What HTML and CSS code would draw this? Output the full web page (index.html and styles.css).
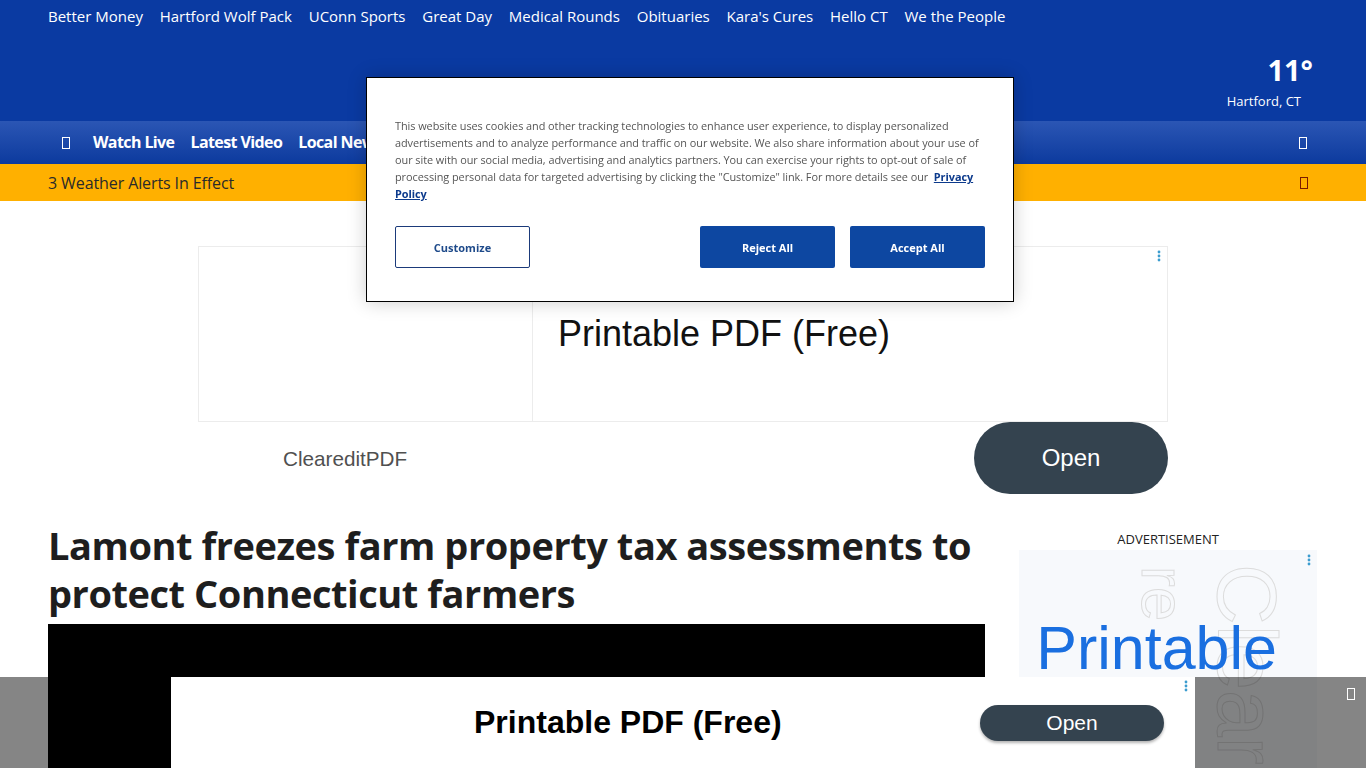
FILE: index.html
```html
<!DOCTYPE html>
<html lang="en">
<head>
<meta charset="utf-8">
<title>Lamont freezes farm property tax assessments</title>
<link rel="stylesheet" href="styles.css">
</head>
<body>
<header class="masthead">
  <nav class="toplinks">
    <a>Better Money</a><a>Hartford Wolf Pack</a><a>UConn Sports</a><a>Great Day</a><a>Medical Rounds</a><a>Obituaries</a><a>Kara's Cures</a><a>Hello CT</a><a>We the People</a>
  </nav>
  <div class="weather">
    <div class="temp">11°</div>
    <div class="city">Hartford, CT</div>
  </div>
</header>
<nav class="mainnav">
  <span class="glyph"></span>
  <a>Watch Live</a><a>Latest Video</a><a>Local News</a>
  <span class="spacer"></span>
  <span class="glyph"></span>
</nav>
<div class="alertbar">
  <span>3 Weather Alerts In Effect</span>
  <span class="glyph dark"></span>
</div>

<main>
  <section class="topad">
    <div class="adbox">
      <div class="adimg"></div>
      <div class="adtitle">Printable PDF (Free)</div>
      <svg class="dots" width="4" height="12" viewBox="0 0 4 12"><circle cx="2" cy="2" r="1.4"/><circle cx="2" cy="6" r="1.4"/><circle cx="2" cy="10" r="1.4"/></svg>
    </div>
    <div class="adfoot">
      <span class="brand">CleareditPDF</span>
      <span class="openbtn">Open</span>
    </div>
  </section>

  <section class="article">
    <div class="maincol">
      <h1>Lamont freezes farm property tax assessments to protect Connecticut farmers</h1>
      <div class="video"></div>
    </div>
    <aside class="sidecol">
      <div class="adlabel">ADVERTISEMENT</div>
      <div class="sidead">
        <span class="wm wm1">re</span>
        <span class="wm wm2">Clear</span>
        <span class="sideword">Printable</span>
        <svg class="dots sdots" width="4" height="12" viewBox="0 0 4 12"><circle cx="2" cy="2" r="1.4"/><circle cx="2" cy="6" r="1.4"/><circle cx="2" cy="10" r="1.4"/></svg>
      </div>
    </aside>
  </section>
</main>

<div class="sticky">
  <div class="stickybox">
    <span class="stickytitle">Printable PDF (Free)</span>
    <span class="stickyopen">Open</span>
    <svg class="dots bdots" width="4" height="12" viewBox="0 0 4 12"><circle cx="2" cy="2" r="1.4"/><circle cx="2" cy="6" r="1.4"/><circle cx="2" cy="10" r="1.4"/></svg>
  </div>
  <span class="glyph light closer"></span>
</div>

<div class="cookie">
  <p>This website uses cookies and other tracking technologies to enhance user experience, to display personalized<br>advertisements and to analyze performance and traffic on our website. We also share information about your use of<br>our site with our social media, advertising and analytics partners. You can exercise your rights to opt-out of sale of<br>processing personal data for targeted advertising by clicking the "Customize" link. For more details see our &nbsp;<a>Privacy<br>Policy</a></p>
  <div class="cbtns">
    <span class="cbtn outline">Customize</span>
    <span class="cspacer"></span>
    <span class="cbtn solid">Reject All</span>
    <span class="cbtn solid">Accept All</span>
  </div>
</div>
</body>
</html>
```
FILE: styles.css
```css
* { box-sizing: border-box; }
html, body { margin: 0; padding: 0; }
body {
  font-family: "Open Sans", "Noto Sans", sans-serif;
  background: #fff;
  color: #222;
  height: 768px;
  overflow: hidden;
}
a { color: inherit; text-decoration: none; }

.masthead {
  background: #0a3aa2;
  height: 121px;
  padding: 0 48px;
  display: flex;
  flex-direction: column;
}
.toplinks {
  display: flex;
  gap: 16.8px;
  padding-top: 6px;
  font-size: 15px;
  color: #fff;
}
.weather {
  align-self: flex-end;
  margin-top: 27px;
  margin-right: 17px;
  color: #fff;
  display: flex;
  flex-direction: column;
  align-items: flex-end;
}
.temp { font-size: 29px; font-weight: 700; line-height: 34px; margin-right: -12px; }
.city { font-size: 13px; line-height: 20px; margin-top: 4px; }

.mainnav {
  height: 43px;
  background: linear-gradient(#2b56b4, #0c3a9e);
  display: flex;
  align-items: center;
  padding: 0 52px 0 62px;
  gap: 16px;
  color: #fff;
  font-weight: 700;
  font-size: 16px;
  letter-spacing: -0.6px;
}
.mainnav a { position: relative; top: -1px; }
.mainnav .glyph { margin-right: 7px; }
.spacer { flex: 1; }
.glyph {
  display: inline-block;
  width: 8px;
  height: 12px;
  border: 1px solid #fff;
}
.glyph.dark { border-color: #7a1a00; }
.glyph.light { border-color: #fff; }

.alertbar {
  height: 37px;
  background: #ffb000;
  display: flex;
  align-items: center;
  justify-content: space-between;
  padding: 0 58px 0 48px;
  font-size: 16px;
  color: #2a2a2a;
  letter-spacing: -0.1px;
}

main { padding-top: 45px; }
.topad { width: 970px; margin: 0 auto; }
.adbox {
  height: 176px;
  border: 1px solid #ececec;
  display: flex;
  position: relative;
}
.adimg { width: 334px; border-right: 1px solid #ececec; }
.adtitle {
  font-family: "Liberation Sans", Arial, sans-serif;
  font-size: 36px;
  color: #111;
  padding: 66px 0 0 25px;
}
.dots { fill: #3b9ccf; }
.adbox .dots { position: absolute; right: 6px; top: 3px; }
.adfoot {
  display: flex;
  align-items: center;
  justify-content: space-between;
  height: 72px;
  padding-left: 85px;
}
.brand {
  font-family: "Liberation Sans", Arial, sans-serif;
  font-size: 20.7px;
  color: #505050;
  position: relative;
  top: 1px;
}
.openbtn {
  width: 194px;
  height: 72px;
  border-radius: 36px;
  background: #34434f;
  color: #fff;
  display: flex;
  align-items: center;
  justify-content: center;
  font-family: "Liberation Sans", Arial, sans-serif;
  font-size: 24px;
}

.article {
  display: flex;
  padding: 26px 48px 0 48px;
  gap: 33px;
}
.maincol { width: 938px; }
h1 {
  margin: 0;
  font-size: 38px;
  line-height: 48px;
  font-weight: 700;
  color: #1e1e1e;
  letter-spacing: -0.45px;
  position: relative;
  top: 1px;
}
.video { height: 200px; background: #000; margin-top: 8px; }
.sidecol { width: 300px; }
.adlabel {
  text-align: center;
  font-size: 13px;
  color: #222;
  line-height: 18px;
  margin-top: 10px;
}
.sidead {
  margin-top: 2px;
  height: 240px;
  width: 298px;
  margin-left: 1px;
  background: #f7f9fc;
  position: relative;
  overflow: hidden;
}
.sideword {
  position: absolute;
  left: 17px;
  top: 63px;
  font-family: "Liberation Sans", Arial, sans-serif;
  font-size: 61px;
  color: #1a6fe0;
}
.wm {
  position: absolute;
  font-family: "Liberation Sans", Arial, sans-serif;
  color: transparent;
  -webkit-text-stroke: 1px #dcdcdc;
  transform: rotate(90deg);
  transform-origin: left top;
}
.wm1 { font-size: 62px; left: 180px; top: 16px; }
.wm2 { font-size: 84px; left: 276px; top: 14px; }
.sdots { position: absolute; right: 6px; top: 4px; }

.sticky {
  position: fixed;
  left: 0; right: 0; bottom: 0;
  height: 91px;
  background: rgba(0, 0, 0, 0.48);
  display: flex;
  justify-content: center;
}
.stickybox {
  width: 1024px;
  height: 91px;
  background: #fff;
  position: relative;
  display: flex;
  align-items: center;
  padding-left: 303px;
}
.stickytitle {
  font-family: "Liberation Sans", Arial, sans-serif;
  font-weight: 700;
  font-size: 32px;
  color: #000;
  letter-spacing: 0;
}
.stickyopen {
  margin-left: auto;
  margin-right: 31px;
  width: 184px;
  height: 36px;
  border-radius: 18px;
  background: #34434f;
  color: #fff;
  display: flex;
  align-items: center;
  justify-content: center;
  font-family: "Liberation Sans", Arial, sans-serif;
  font-size: 21px;
  box-shadow: 0 2px 3px rgba(0,0,0,0.3);
}
.bdots { position: absolute; right: 7px; top: 3px; }
.closer { position: absolute; right: 11px; top: 11px; }

.cookie {
  position: fixed;
  left: 366px;
  top: 77px;
  width: 648px;
  height: 225px;
  background: #fff;
  border: 1px solid #000;
  box-shadow: 0 0 18px rgba(0,0,0,0.2);
  padding: 39px 28px 0 28px;
}
.cookie p {
  margin: 0;
  font-size: 10.9px;
  line-height: 17px;
  color: #555;
  letter-spacing: -0.05px;
}
.cookie p a { color: #0c3a8c; font-weight: 700; text-decoration: underline; }
.cbtns {
  display: flex;
  gap: 15px;
  margin-top: 24px;
}
.cspacer { flex: 1; }
.cbtn {
  width: 135px;
  height: 42px;
  border-radius: 2px;
  display: flex;
  align-items: center;
  justify-content: center;
  font-size: 11px;
  font-weight: 700;
}
.cbtn.outline { border: 1px solid #1b3a7a; color: #1e4a8a; }
.cbtn.solid { background: #0d47a1; color: #fff; }
```
